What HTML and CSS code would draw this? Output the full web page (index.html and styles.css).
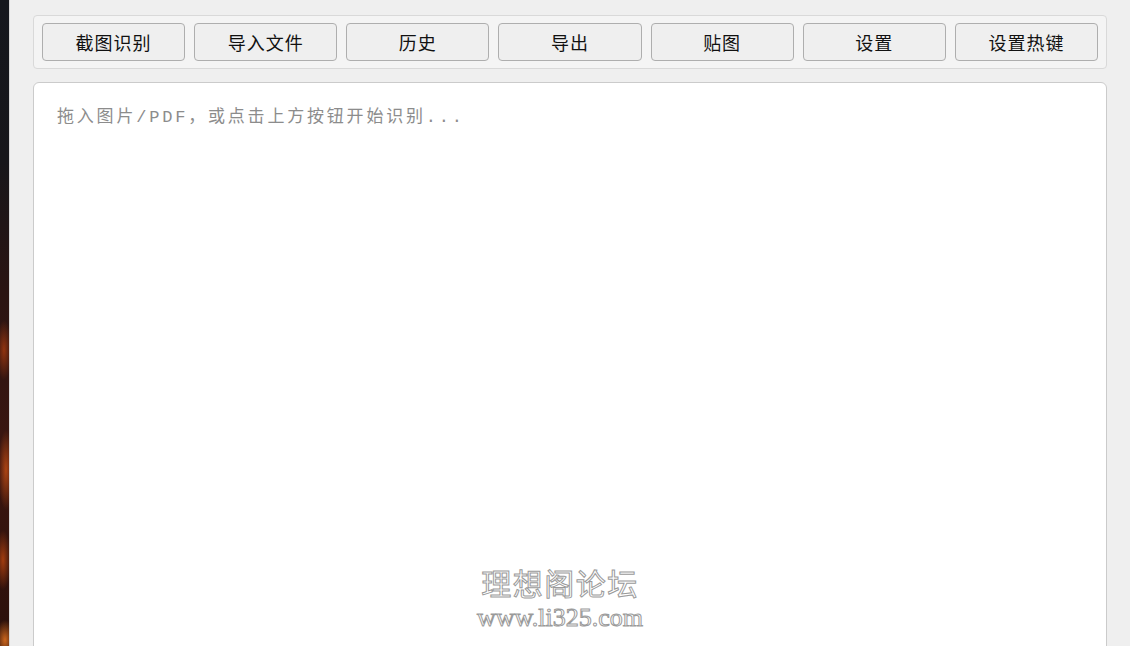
FILE: index.html
```html
<!DOCTYPE html>
<html lang="zh-CN">
<head>
    <meta charset="UTF-8">
    <meta name="viewport" content="width=device-width, initial-scale=1.0">
    <title>OCR</title>
    <link rel="stylesheet" href="styles.css">
</head>
<body>
    <div class="wallpaper"></div>
    <div class="window">
        <div class="toolbar">
            <button type="button">截图识别</button>
            <button type="button">导入文件</button>
            <button type="button">历史</button>
            <button type="button">导出</button>
            <button type="button">贴图</button>
            <button type="button">设置</button>
            <button type="button">设置热键</button>
        </div>

        <div class="editor">
            <textarea id="result" placeholder="拖入图片/PDF，或点击上方按钮开始识别..."></textarea>
            <div class="watermark">
                <div class="wm-name">理想阁论坛</div>
                <div class="wm-url">www.li325.com</div>
            </div>
        </div>
    </div>
</body>
</html>
```

FILE: styles.css
```css
html, body {
    height: 100%;
}

body {
    margin: 0;
    display: flex;
    overflow: hidden;
    background-color: #efefef;
    font-family: "Noto Sans CJK SC", sans-serif;
}

.wallpaper {
    width: 9px;
    flex-shrink: 0;
    background:
        radial-gradient(ellipse 8px 30px at 4px 350px, rgba(170,60,15,0.8), transparent),
        radial-gradient(ellipse 8px 40px at 6px 470px, rgba(200,80,20,0.8), transparent),
        radial-gradient(ellipse 8px 30px at 3px 560px, rgba(190,70,15,0.8), transparent),
        radial-gradient(ellipse 10px 20px at 5px 640px, rgba(220,110,30,0.9), transparent),
        linear-gradient(to bottom, #15171d 0%, #17161a 25%, #2a1412 45%, #3b1610 70%, #2a100b 100%);
}

.window {
    flex: 1;
    padding: 15px 23px 0 23px;
    display: flex;
    flex-direction: column;
    gap: 13px;
    border-left: 1px solid #d6d6d6;
}

.toolbar {
    display: flex;
    gap: 9px;
    padding: 7px 8px;
    background-color: #f4f4f4;
    border: 1px solid #d9d9d9;
    border-radius: 4px;
}

.toolbar button {
    flex: 1;
    height: 38px;
    background-color: #efefef;
    border: 1px solid #aeaeae;
    border-radius: 4px;
    color: #111;
    font-family: "Noto Sans CJK SC", sans-serif;
    font-size: 18px;
    letter-spacing: 1px;
    cursor: pointer;
}

.toolbar button:hover {
    background-color: #e5f1fb;
}

.editor {
    position: relative;
    flex: 1;
    margin-bottom: -20px;
}

.editor textarea {
    display: block;
    box-sizing: border-box;
    width: 100%;
    height: 100%;
    padding: 19px 23px;
    border: 1px solid #cbcbcb;
    border-radius: 6px 6px 0 0;
    background-color: white;
    resize: none;
    outline: none;
    font-family: "Liberation Mono", "Noto Sans CJK SC", monospace;
    font-size: 17px;
    letter-spacing: 2.8px;
    color: #333;
}

.editor textarea::placeholder {
    color: #8c8c8c;
}

.watermark {
    position: absolute;
    left: -20px;
    right: 0;
    top: 483px;
    text-align: center;
    color: white;
    -webkit-text-stroke: 1px #9a9a9a;
    pointer-events: none;
}

.wm-name {
    font-family: "Noto Sans CJK SC", sans-serif;
    font-size: 30px;
    line-height: 34px;
    letter-spacing: 1.5px;
}

.wm-url {
    margin-top: 5px;
    font-family: "Liberation Serif", serif;
    font-size: 26px;
    line-height: 28px;
}
```
